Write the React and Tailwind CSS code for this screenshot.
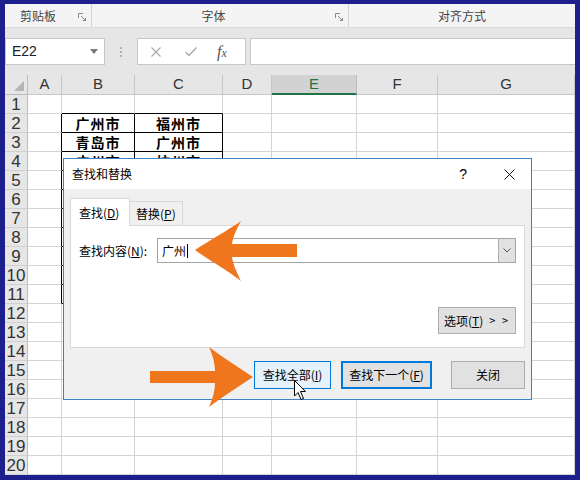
import React from 'react';

const COLS = ['A', 'B', 'C', 'D', 'E', 'F', 'G'];
const DATA = {
  B2: '广州市', C2: '福州市',
  B3: '青岛市', C3: '广州市',
  B4: '广州市', C4: '杭州市',
};

function Launcher() {
  return (
    <svg width="9" height="9" viewBox="0 0 9 9" className="shrink-0">
      <path d="M0.5 5 V0.5 H5" fill="none" stroke="#8a8a8a" strokeWidth="1" />
      <path d="M3 3 L7.5 7.5" fill="none" stroke="#8a8a8a" strokeWidth="1" />
      <path d="M8 4.5 V8 H4.5 Z" fill="#8a8a8a" />
    </svg>
  );
}

function cellClass(col, row) {
  const inTable = (col === 'B' || col === 'C') && row >= 2 && row <= 11;
  if (inTable) return 'border-r border-b border-black bg-white';
  if ((col === 'B' || col === 'C') && row === 1)
    return 'border-r border-b border-r-[#d4d4d4] border-b-black bg-white';
  if (col === 'A' && row >= 2 && row <= 11)
    return 'border-r border-b border-r-black border-b-[#d4d4d4] bg-white';
  return 'border-r border-b border-[#d4d4d4] bg-white';
}

function Sheet() {
  const rows = Array.from({ length: 20 }, (_, i) => i + 1);
  return (
    <div className="grid grid-cols-[23px_34px_73px_88px_49px_85px_81px_137px] grid-rows-[20px_repeat(20,19px)] font-['Liberation_Sans','Noto_Sans_CJK_SC',sans-serif]">
      <div className="relative bg-[#e6e6e6] border-r border-b border-[#bdbdbd]">
        <svg width="12" height="12" viewBox="0 0 12 12" className="absolute right-[2px] bottom-[2px]">
          <path d="M11 1 V11 H1 Z" fill="#b4b4b4" />
        </svg>
      </div>
      {COLS.map((c) =>
        c === 'E' ? (
          <div key={c} className="flex items-center justify-center bg-[#d2d2d2] border-r border-b-2 border-r-[#bdbdbd] border-b-[#217346] text-[15px] text-[#217346]">
            {c}
          </div>
        ) : (
          <div key={c} className="flex items-center justify-center bg-[#e6e6e6] border-r border-b border-[#c6c6c6] text-[15px] text-[#333]">
            {c}
          </div>
        )
      )}
      {rows.map((r) => (
        <React.Fragment key={r}>
          <div className="flex items-center justify-center bg-[#e6e6e6] border-r border-b border-r-[#bdbdbd] border-b-[#d0d0d0] text-[17px] leading-none text-[#333]">
            {r}
          </div>
          {COLS.map((c) => (
            <div key={c + r} className={cellClass(c, r) + ' flex items-center justify-center'}>
              {DATA[c + r] ? (
                <span className="font-['Noto_Sans_CJK_SC',sans-serif] text-[14px] font-semibold tracking-[1px] leading-none text-black">
                  {DATA[c + r]}
                </span>
              ) : null}
            </div>
          ))}
        </React.Fragment>
      ))}
    </div>
  );
}

function Dialog() {
  return (
    <div className="absolute left-[58px] top-[154px] w-[469px] h-[242px] border border-[#3c83c4] bg-[#f0f0f0] flex flex-col font-['Noto_Sans_CJK_SC',sans-serif] text-[12px] text-black">
      <div className="h-[30px] shrink-0 bg-white flex items-center pl-[8px] pr-[16px]">
        <span className="text-[12px]">查找和替换</span>
        <span className="ml-auto mr-[37px] text-[14px] font-['Liberation_Sans',sans-serif]">?</span>
        <svg width="11" height="11" viewBox="0 0 11 11">
          <path d="M0.5 0.5 L10.5 10.5 M10.5 0.5 L0.5 10.5" stroke="#111" strokeWidth="1" />
        </svg>
      </div>
      <div className="flex-1 pt-[9px] px-[6px]">
        <div className="flex items-end h-[27px]">
          <div className="relative z-10 -mb-px h-[28px] w-[60px] bg-white border-t border-l border-r border-[#d9d9d9] flex items-center pl-[8px]">
            查找(<span className="underline">D</span>)
          </div>
          <div className="h-[24px] w-[53px] bg-[#f0f0f0] border-t border-r border-[#d9d9d9] flex items-center pl-[6px]">
            替换(<span className="underline">P</span>)
          </div>
        </div>
        <div className="h-[123px] bg-white border border-[#d9d9d9] pt-[12px] pl-[8px]">
          <div className="flex items-center h-[25px]">
            <div className="w-[78px]">
              查找内容(<span className="underline">N</span>):
            </div>
            <div className="w-[359px] h-[25px] border border-[#a5a5a5] bg-white flex items-center">
              <span className="pl-[4px]">广州</span>
              <span className="w-px h-[14px] bg-black ml-[1px]"></span>
              <div className="ml-auto w-[17px] h-[23px] bg-[#e1e1e1] border-l border-[#adadad] flex items-center justify-center">
                <svg width="8" height="5" viewBox="0 0 8 5">
                  <path d="M0.5 0.5 L4 4 L7.5 0.5" fill="none" stroke="#555" strokeWidth="1" />
                </svg>
              </div>
            </div>
          </div>
          <div className="flex justify-end pr-[8px] mt-[44px]">
            <div className="w-[78px] h-[27px] bg-[#e1e1e1] border border-[#adadad] flex items-center justify-center">
              选项(<span className="underline">T</span>)<span className="ml-[6px] text-[11px] tracking-[2px]">&gt; &gt;</span>
            </div>
          </div>
        </div>
        <div className="flex justify-end mt-[13px]">
          <div className="w-[77px] h-[28px] bg-[#e5f1fb] border border-[#0078d7] flex items-center justify-center">
            查找全部(<span className="underline">I</span>)
          </div>
          <div className="ml-[10px] w-[91px] h-[28px] bg-[#e1e1e1] border-2 border-[#0078d7] flex items-center justify-center">
            查找下一个(<span className="underline">F</span>)
          </div>
          <div className="ml-[19px] w-[74px] h-[28px] bg-[#e1e1e1] border border-[#adadad] flex items-center justify-center">
            关闭
          </div>
        </div>
      </div>
    </div>
  );
}

export default function App() {
  return (
    <div className="relative w-[580px] h-[480px] bg-[#1c1f8c] pt-[4px] pl-[5px] pr-[5px] pb-[5px]">
      <div className="relative w-[570px] h-[471px] bg-white overflow-hidden">
        {/* Ribbon group labels */}
        <div className="h-[23px] bg-[#f4f4f4] flex font-['Noto_Sans_CJK_SC',sans-serif] text-[12px] text-[#444]">
          <div className="w-[87px] border-r border-[#d4d4d4] flex items-center pl-[15px] pr-[4px]">
            <span>剪贴板</span>
            <span className="ml-auto mt-[4px]"><Launcher /></span>
          </div>
          <div className="w-[257px] border-r border-[#d4d4d4] flex items-center pr-[4px]">
            <span className="flex-1 text-center">字体</span>
            <span className="mt-[4px]"><Launcher /></span>
          </div>
          <div className="flex-1 flex items-center justify-center">对齐方式</div>
        </div>
        {/* Formula bar band */}
        <div className="h-[48px] bg-[#e6e6e6] border-t border-[#dadada] pt-[10px]">
          <div className="flex h-[27px]">
            <div className="w-[100px] h-[27px] bg-white border border-[#c6c6c6] flex items-center pl-[6px] pr-[6px] font-['Liberation_Sans',sans-serif] text-[14px] text-[#222]">
              E22
              <svg width="8" height="5" viewBox="0 0 8 5" className="ml-auto">
                <path d="M0 0 H8 L4 5 Z" fill="#7a7a7a" />
              </svg>
            </div>
            <div className="w-[32px] flex flex-col items-center justify-center gap-[2px]">
              <span className="w-[2px] h-[2px] bg-[#b0b0b0]"></span>
              <span className="w-[2px] h-[2px] bg-[#b0b0b0]"></span>
              <span className="w-[2px] h-[2px] bg-[#b0b0b0]"></span>
            </div>
            <div className="w-[109px] h-[27px] bg-white border border-[#c6c6c6] flex items-center">
              <svg width="10" height="10" viewBox="0 0 10 10" className="ml-[13px]">
                <path d="M0.5 0.5 L9.5 9.5 M9.5 0.5 L0.5 9.5" stroke="#a8a8a8" strokeWidth="1.2" />
              </svg>
              <svg width="12" height="10" viewBox="0 0 12 10" className="ml-[24px]">
                <path d="M0.5 5 L4 8.5 L11.5 0.5" fill="none" stroke="#a8a8a8" strokeWidth="1.3" />
              </svg>
              <span className="ml-[20px] font-['Liberation_Serif',serif] italic text-[16px] leading-none text-[#555]">
                f<span className="text-[12px]">x</span>
              </span>
            </div>
            <div className="ml-[4px] flex-1 h-[27px] bg-white border-t border-b border-l border-[#c6c6c6]"></div>
          </div>
        </div>
        <Sheet />
        <Dialog />
      </div>
      {/* Overlay: arrows and cursor */}
      <svg width="580" height="480" viewBox="0 0 580 480" className="absolute inset-0 pointer-events-none">
        <path
          d="M195 250 C210 240 227 231 241 221 C236 230 233 237 232 244 L297 244 L297 257 L232 257 C233 264 236 271 241 281 C227 270 210 261 195 250 Z"
          fill="#f0761e"
        />
        <path
          d="M253 377 C238 367 222 357 209 347 C213 356 215 364 215 371 L150 371 L150 383 L215 383 C215 390 213 398 209 407 C222 397 238 387 253 377 Z"
          fill="#f0761e"
        />
        <path
          d="M294.5 380.5 L294.5 396 L298 392.5 L301 399.5 L303.5 398.5 L300.5 391.5 L305.5 391.5 Z"
          fill="#fff"
          stroke="#000"
          strokeWidth="1"
          strokeLinejoin="round"
        />
      </svg>
    </div>
  );
}
